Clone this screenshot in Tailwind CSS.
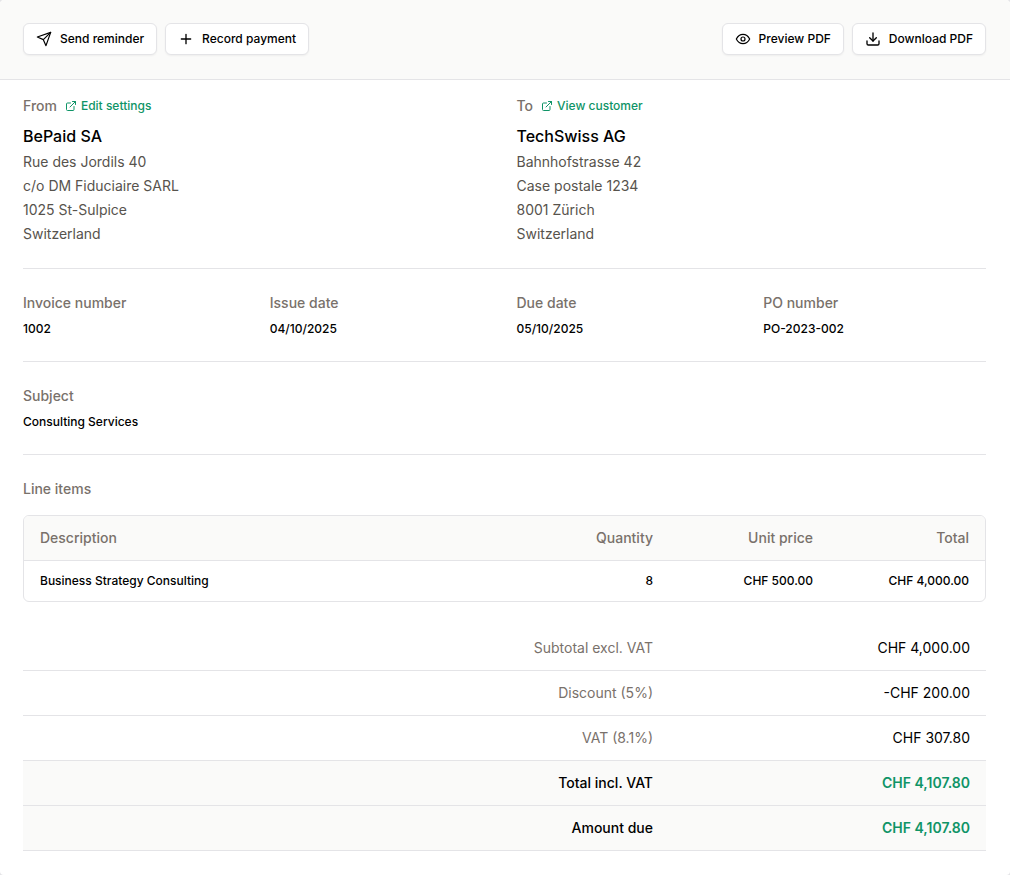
<!DOCTYPE html>
<html lang="en" class="bg-[#e4e4e7]">
<head>
    <meta charset="UTF-8">
    <meta name="viewport" content="width=device-width, initial-scale=1.0">
    <title>Invoice 1002</title>
    <script src="https://cdn.jsdelivr.net/npm/@tailwindcss/browser@4"></script>
</head>
<body class="min-h-screen rounded-sm bg-white font-[Inter,sans-serif] text-sm text-black">
    <!-- Actions -->
    <header class="flex flex-wrap items-center justify-between gap-2 rounded-t-sm border-b border-[#e4e4e7] bg-[#fafaf9] pt-[23px] pr-6 pb-6 pl-[23px]">
        <div class="flex gap-2">
            <button type="button" class="flex h-8 items-center gap-2 rounded-md border border-[#e4e4e7] bg-white px-3 text-xs font-medium shadow-xs hover:bg-stone-50">
                <svg class="size-4" viewBox="0 0 24 24" fill="none" stroke="currentColor" stroke-width="1.8" stroke-linecap="round" stroke-linejoin="round" aria-hidden="true"><path d="M22 2 15 22l-4-9-9-4Z"/><path d="M22 2 11 13"/></svg>
                Send reminder
            </button>
            <button type="button" class="flex h-8 items-center gap-2 rounded-md border border-[#e4e4e7] bg-white px-3 text-xs font-medium shadow-xs hover:bg-stone-50">
                <svg class="size-4" viewBox="0 0 24 24" fill="none" stroke="currentColor" stroke-width="2" stroke-linecap="round" stroke-linejoin="round" aria-hidden="true"><path d="M5 12h14M12 5v14"/></svg>
                Record payment
            </button>
        </div>
        <div class="flex gap-2">
            <button type="button" class="flex h-8 items-center gap-2 rounded-md border border-[#e4e4e7] bg-white px-3 text-xs font-medium shadow-xs hover:bg-stone-50">
                <svg class="size-4" viewBox="0 0 24 24" fill="none" stroke="currentColor" stroke-width="1.8" stroke-linecap="round" stroke-linejoin="round" aria-hidden="true"><path d="M2 12s3.5-7 10-7 10 7 10 7-3.5 7-10 7-10-7-10-7Z"/><circle cx="12" cy="12" r="3"/></svg>
                Preview PDF
            </button>
            <button type="button" class="flex h-8 items-center gap-2 rounded-md border border-[#e4e4e7] bg-white px-3 text-xs font-medium shadow-xs hover:bg-stone-50">
                <svg class="size-4" viewBox="0 0 24 24" fill="none" stroke="currentColor" stroke-width="2" stroke-linecap="round" stroke-linejoin="round" aria-hidden="true"><path d="M21 15v4a2 2 0 0 1-2 2H5a2 2 0 0 1-2-2v-4"/><path d="m7 10 5 5 5-5"/><path d="M12 15V3"/></svg>
                Download PDF
            </button>
        </div>
    </header>

    <main class="pr-6 pb-6 pl-[23px]">
        <!-- Parties -->
        <section class="grid grid-cols-2 gap-6 border-b border-[#e4e4e7] pt-4 pb-[22px]">
            <div>
                <div class="mb-2 flex items-center gap-2">
                    <h2 class="font-medium text-stone-500">From</h2>
                    <a href="#" class="flex items-center gap-1 text-xs font-medium text-[#0f9467] hover:underline">
                        <svg class="size-3" viewBox="0 0 24 24" fill="none" stroke="currentColor" stroke-width="2" stroke-linecap="round" stroke-linejoin="round" aria-hidden="true"><path d="M15 3h6v6"/><path d="M10 14 21 3"/><path d="M18 13v6a2 2 0 0 1-2 2H5a2 2 0 0 1-2-2V8a2 2 0 0 1 2-2h6"/></svg>
                        Edit settings
                    </a>
                </div>
                <p class="mb-0.5 text-base font-medium">BePaid SA</p>
                <address class="leading-6 text-stone-600 not-italic">Rue des Jordils 40<br>c/o DM Fiduciaire SARL<br>1025 St-Sulpice<br>Switzerland</address>
            </div>
            <div>
                <div class="mb-2 flex items-center gap-2">
                    <h2 class="font-medium text-stone-500">To</h2>
                    <a href="#" class="flex items-center gap-1 text-xs font-medium text-[#0f9467] hover:underline">
                        <svg class="size-3" viewBox="0 0 24 24" fill="none" stroke="currentColor" stroke-width="2" stroke-linecap="round" stroke-linejoin="round" aria-hidden="true"><path d="M15 3h6v6"/><path d="M10 14 21 3"/><path d="M18 13v6a2 2 0 0 1-2 2H5a2 2 0 0 1-2-2V8a2 2 0 0 1 2-2h6"/></svg>
                        View customer
                    </a>
                </div>
                <p class="mb-0.5 text-base font-medium">TechSwiss AG</p>
                <address class="leading-6 text-stone-600 not-italic">Bahnhofstrasse 42<br>Case postale 1234<br>8001 Zürich<br>Switzerland</address>
            </div>
        </section>

        <!-- Invoice details -->
        <dl class="grid grid-cols-4 gap-6 border-b border-[#e4e4e7] py-6">
            <div class="grid gap-2">
                <dt class="font-medium text-stone-500">Invoice number</dt>
                <dd class="text-xs font-medium">1002</dd>
            </div>
            <div class="grid gap-2">
                <dt class="font-medium text-stone-500">Issue date</dt>
                <dd class="text-xs font-medium">04/10/2025</dd>
            </div>
            <div class="grid gap-2">
                <dt class="font-medium text-stone-500">Due date</dt>
                <dd class="text-xs font-medium">05/10/2025</dd>
            </div>
            <div class="grid gap-2">
                <dt class="font-medium text-stone-500">PO number</dt>
                <dd class="text-xs font-medium">PO-2023-002</dd>
            </div>
        </dl>

        <dl class="grid gap-2 border-b border-[#e4e4e7] py-6">
            <dt class="font-medium text-stone-500">Subject</dt>
            <dd class="text-xs font-medium">Consulting Services</dd>
        </dl>

        <!-- Line items -->
        <section class="pt-6">
            <h2 class="mb-4 font-medium text-stone-500">Line items</h2>
            <div class="overflow-hidden rounded-md border border-[#e4e4e7]">
                <table class="w-full">
                    <thead>
                        <tr class="h-11 bg-[#fafaf9] text-stone-500">
                            <th class="px-4 text-left font-medium">Description</th>
                            <th class="px-4 text-right font-medium">Quantity</th>
                            <th class="w-40 px-4 text-right font-medium">Unit price</th>
                            <th class="w-[156px] px-4 text-right font-medium">Total</th>
                        </tr>
                    </thead>
                    <tbody class="border-t border-[#e4e4e7] text-xs">
                        <tr class="h-[41px] font-medium">
                            <td class="px-4">Business Strategy Consulting</td>
                            <td class="px-4 text-right">8</td>
                            <td class="px-4 text-right">CHF 500.00</td>
                            <td class="px-4 text-right">CHF 4,000.00</td>
                        </tr>
                    </tbody>
                </table>
            </div>

            <!-- Totals -->
            <table class="mt-6 w-full text-right">
                <tbody>
                    <tr class="h-11 border-b border-[#e4e4e7]">
                        <th scope="row" class="px-4 text-right font-normal text-stone-500">Subtotal excl. VAT</th>
                        <td class="w-[317px] px-4">CHF 4,000.00</td>
                    </tr>
                    <tr class="h-[45px] border-b border-[#e4e4e7]">
                        <th scope="row" class="px-4 text-right font-normal text-stone-500">Discount (5%)</th>
                        <td class="px-4">-CHF 200.00</td>
                    </tr>
                    <tr class="h-[45px] border-b border-[#e4e4e7]">
                        <th scope="row" class="px-4 text-right font-normal text-stone-500">VAT (8.1%)</th>
                        <td class="px-4">CHF 307.80</td>
                    </tr>
                    <tr class="h-[45px] border-b border-[#e4e4e7] bg-[#fafaf9] font-medium">
                        <th scope="row" class="px-4 text-right font-medium">Total incl. VAT</th>
                        <td class="px-4 font-semibold text-[#0f9467]">CHF 4,107.80</td>
                    </tr>
                    <tr class="h-[45px] border-b border-[#e4e4e7] bg-[#fafaf9] font-medium">
                        <th scope="row" class="px-4 text-right font-medium">Amount due</th>
                        <td class="px-4 font-semibold text-[#0f9467]">CHF 4,107.80</td>
                    </tr>
                </tbody>
            </table>
        </section>
    </main>
</body>
</html>
